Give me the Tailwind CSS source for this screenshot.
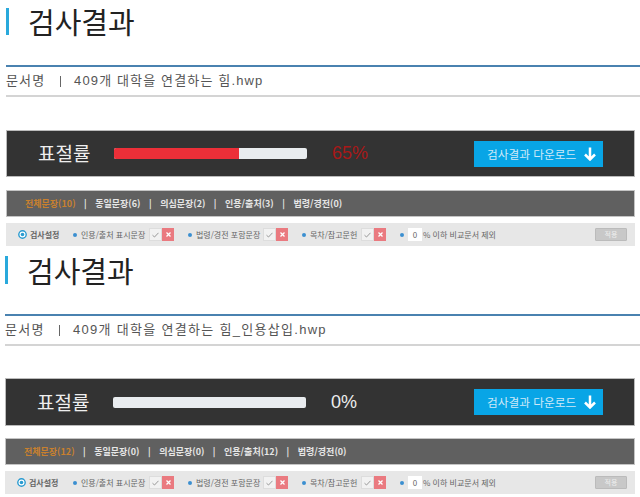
<!DOCTYPE html>
<html lang="ko">
<head>
  <meta charset="UTF-8" />
  <title>검사결과</title>
  <script src="https://cdn.jsdelivr.net/npm/@tailwindcss/browser@4"></script>
</head>
<body class="bg-white w-[640px] h-[497px] overflow-hidden font-['Noto_Sans_CJK_KR','Liberation_Sans',sans-serif]">

  <!-- First result -->
  <section class="h-[248px] pl-[6px] pt-[8px]">
    <div class="h-[27px] flex items-center border-l-[3px] border-[#29a9dc] pl-[19px]">
      <h1 class="text-[29px] leading-none text-[#222]">검사결과</h1>
    </div>
    <div class="mt-[30px] border-t-2 border-[#4a82b0] h-[32px] flex items-center text-[13px] tracking-[1.15px] text-[#555] border-b-2 border-b-[#d4d4d4]">
      <span class="w-[39px] whitespace-nowrap font-['Liberation_Sans','Noto_Sans_CJK_KR',sans-serif]">문서명</span>
      <span class="ml-[15px] w-px h-[11px] mr-[2px] bg-[#666]"></span>
      <span class="ml-[11px] font-['Liberation_Sans','Noto_Sans_CJK_KR',sans-serif]">409개 대학을 연결하는 힘.hwp</span>
    </div>
    <div class="mt-[33px] w-[629px] h-[47px] bg-[#333] border border-[#bbb] flex items-center">
      <span class="ml-[31px] w-[76px] text-[19px] text-[#eee]">표절률</span>
      <div class="w-[193px] h-[11px] rounded-[2px] bg-[#e9ecef] overflow-hidden">
        <div class="h-full bg-[#ec2f38]" style="width: 65%"></div>
      </div>
      <span class="ml-[25px] w-[142px] text-[18px] font-['Liberation_Sans',sans-serif] text-[#a81818]">65%</span>
      <div class="w-[129px] h-[26px] bg-[#08a5e6] flex items-center pl-[13px] gap-[8px] text-[11.7px] text-[#cfe9f8]">
        <span>검사결과 다운로드</span>
        <svg width="12" height="14" viewBox="0 0 12 14" fill="none" stroke="#fff" stroke-width="2.5"><path d="M6 0.5V12M1 7.5L6 12.5L11 7.5"/></svg>
      </div>
    </div>
    <div class="mt-[13px] w-[629px] h-[27px] bg-[#606060] border border-[#c4c4c4] flex items-center pl-[18px] text-[9px] font-bold text-[#e6e6e6]">
      <span class="text-[#c9802e]">전체문장(10)</span>
      <span class="mx-[8.5px]">|</span>
      <span>동일문장(6)</span>
      <span class="mx-[8.5px]">|</span>
      <span>의심문장(2)</span>
      <span class="mx-[8.5px]">|</span>
      <span>인용/출처(3)</span>
      <span class="mx-[8.5px]">|</span>
      <span>법령/경전(0)</span>
    </div>
    <div class="mt-[6px] w-[629px] h-[23px] bg-[#e7e7e7] flex items-center pl-[12px] text-[8px] text-[#666] whitespace-nowrap">
      <svg width="9" height="9" viewBox="0 0 9 9"><circle cx="4.5" cy="4.5" r="3.7" fill="#fff" stroke="#2a9bd0" stroke-width="1.4"/><circle cx="4.5" cy="4.5" r="1.8" fill="#2a9bd0"/></svg>
      <span class="ml-[3px] w-[43px] font-bold">검사설정</span>
      <span class="w-[4px] h-[4px] rounded-full bg-[#3b8fd0]"></span>
      <span class="ml-[4px] w-[68px]">인용/출처 표시문장</span>
      <span class="w-[13px] h-[13px] bg-[#f2f2f2] border border-[#ddd] flex items-center justify-center">
        <svg width="7" height="6" viewBox="0 0 7 6" fill="none" stroke="#999" stroke-width="1"><path d="M0.5 3.2L2.5 5L6.5 0.8"/></svg>
      </span>
      <span class="w-[12px] h-[13px] bg-[#ea7a80] flex items-center justify-center">
        <svg width="5" height="5" viewBox="0 0 5 5" fill="none" stroke="#fff" stroke-width="1.3"><path d="M0.5 0.5L4.5 4.5M4.5 0.5L0.5 4.5"/></svg>
      </span>
      <span class="ml-[14px] w-[4px] h-[4px] rounded-full bg-[#3b8fd0]"></span>
      <span class="ml-[4px] w-[67px]">법령/경전 포함문장</span>
      <span class="w-[13px] h-[13px] bg-[#f2f2f2] border border-[#ddd] flex items-center justify-center">
        <svg width="7" height="6" viewBox="0 0 7 6" fill="none" stroke="#999" stroke-width="1"><path d="M0.5 3.2L2.5 5L6.5 0.8"/></svg>
      </span>
      <span class="w-[12px] h-[13px] bg-[#ea7a80] flex items-center justify-center">
        <svg width="5" height="5" viewBox="0 0 5 5" fill="none" stroke="#fff" stroke-width="1.3"><path d="M0.5 0.5L4.5 4.5M4.5 0.5L0.5 4.5"/></svg>
      </span>
      <span class="ml-[14px] w-[4px] h-[4px] rounded-full bg-[#3b8fd0]"></span>
      <span class="ml-[4px] w-[51px]">목차/참고문헌</span>
      <span class="w-[13px] h-[13px] bg-[#f2f2f2] border border-[#ddd] flex items-center justify-center">
        <svg width="7" height="6" viewBox="0 0 7 6" fill="none" stroke="#999" stroke-width="1"><path d="M0.5 3.2L2.5 5L6.5 0.8"/></svg>
      </span>
      <span class="w-[12px] h-[13px] bg-[#ea7a80] flex items-center justify-center">
        <svg width="5" height="5" viewBox="0 0 5 5" fill="none" stroke="#fff" stroke-width="1.3"><path d="M0.5 0.5L4.5 4.5M4.5 0.5L0.5 4.5"/></svg>
      </span>
      <span class="ml-[14px] w-[4px] h-[4px] rounded-full bg-[#3b8fd0]"></span>
      <span class="ml-[4px] w-[14px] h-[13px] bg-white flex items-center justify-center text-[8px]">0</span>
      <span class="ml-[1px] w-[71px]">% 이하 비교문서 제외</span>
      <span class="ml-[101px] w-[32px] h-[13px] bg-[#c8c8c8] border border-[#bbb] rounded-[1px] flex items-center justify-center text-[7px] text-[#eee]">적용</span>
    </div>
  </section>

  <!-- Second result -->
  <section class="h-[249px] pl-[5px] pt-[8px]">
    <div class="h-[28px] flex items-center border-l-[3px] border-[#29a9dc] pl-[19px]">
      <h1 class="text-[29px] leading-none text-[#222]">검사결과</h1>
    </div>
    <div class="mt-[30px] border-t-2 border-[#4a82b0] h-[32px] flex items-center text-[13px] tracking-[1.3px] text-[#555] border-b-2 border-b-[#d4d4d4]">
      <span class="w-[39px] whitespace-nowrap font-['Liberation_Sans','Noto_Sans_CJK_KR',sans-serif]">문서명</span>
      <span class="ml-[15px] w-px h-[11px] mr-[2px] bg-[#666]"></span>
      <span class="ml-[11px] font-['Liberation_Sans','Noto_Sans_CJK_KR',sans-serif]">409개 대학을 연결하는 힘_인용삽입.hwp</span>
    </div>
    <div class="mt-[32px] w-[630px] h-[48px] bg-[#333] border border-[#bbb] flex items-center">
      <span class="ml-[31px] w-[76px] text-[19px] text-[#eee]">표절률</span>
      <div class="w-[193px] h-[11px] rounded-[2px] bg-[#e9ecef]"></div>
      <span class="ml-[25px] w-[143px] text-[18px] font-['Liberation_Sans',sans-serif] text-[#eee]">0%</span>
      <div class="w-[129px] h-[26px] bg-[#08a5e6] flex items-center pl-[13px] gap-[8px] text-[11.7px] text-[#cfe9f8]">
        <span>검사결과 다운로드</span>
        <svg width="12" height="14" viewBox="0 0 12 14" fill="none" stroke="#fff" stroke-width="2.5"><path d="M6 0.5V12M1 7.5L6 12.5L11 7.5"/></svg>
      </div>
    </div>
    <div class="mt-[12px] w-[630px] h-[27px] bg-[#606060] border border-[#c4c4c4] flex items-center pl-[18px] text-[9px] font-bold text-[#e6e6e6]">
      <span class="text-[#c9802e]">전체문장(12)</span>
      <span class="mx-[8.5px]">|</span>
      <span>동일문장(0)</span>
      <span class="mx-[8.5px]">|</span>
      <span>의심문장(0)</span>
      <span class="mx-[8.5px]">|</span>
      <span>인용/출처(12)</span>
      <span class="mx-[8.5px]">|</span>
      <span>법령/경전(0)</span>
    </div>
    <div class="mt-[6px] w-[630px] h-[23px] bg-[#e7e7e7] flex items-center pl-[12px] text-[8px] text-[#666] whitespace-nowrap">
      <svg width="9" height="9" viewBox="0 0 9 9"><circle cx="4.5" cy="4.5" r="3.7" fill="#fff" stroke="#2a9bd0" stroke-width="1.4"/><circle cx="4.5" cy="4.5" r="1.8" fill="#2a9bd0"/></svg>
      <span class="ml-[3px] w-[44px] font-bold">검사설정</span>
      <span class="w-[4px] h-[4px] rounded-full bg-[#3b8fd0]"></span>
      <span class="ml-[4px] w-[68px]">인용/출처 표시문장</span>
      <span class="w-[13px] h-[13px] bg-[#f2f2f2] border border-[#ddd] flex items-center justify-center">
        <svg width="7" height="6" viewBox="0 0 7 6" fill="none" stroke="#999" stroke-width="1"><path d="M0.5 3.2L2.5 5L6.5 0.8"/></svg>
      </span>
      <span class="w-[12px] h-[13px] bg-[#ea7a80] flex items-center justify-center">
        <svg width="5" height="5" viewBox="0 0 5 5" fill="none" stroke="#fff" stroke-width="1.3"><path d="M0.5 0.5L4.5 4.5M4.5 0.5L0.5 4.5"/></svg>
      </span>
      <span class="ml-[14px] w-[4px] h-[4px] rounded-full bg-[#3b8fd0]"></span>
      <span class="ml-[4px] w-[67px]">법령/경전 포함문장</span>
      <span class="w-[13px] h-[13px] bg-[#f2f2f2] border border-[#ddd] flex items-center justify-center">
        <svg width="7" height="6" viewBox="0 0 7 6" fill="none" stroke="#999" stroke-width="1"><path d="M0.5 3.2L2.5 5L6.5 0.8"/></svg>
      </span>
      <span class="w-[12px] h-[13px] bg-[#ea7a80] flex items-center justify-center">
        <svg width="5" height="5" viewBox="0 0 5 5" fill="none" stroke="#fff" stroke-width="1.3"><path d="M0.5 0.5L4.5 4.5M4.5 0.5L0.5 4.5"/></svg>
      </span>
      <span class="ml-[14px] w-[4px] h-[4px] rounded-full bg-[#3b8fd0]"></span>
      <span class="ml-[4px] w-[51px]">목차/참고문헌</span>
      <span class="w-[13px] h-[13px] bg-[#f2f2f2] border border-[#ddd] flex items-center justify-center">
        <svg width="7" height="6" viewBox="0 0 7 6" fill="none" stroke="#999" stroke-width="1"><path d="M0.5 3.2L2.5 5L6.5 0.8"/></svg>
      </span>
      <span class="w-[12px] h-[13px] bg-[#ea7a80] flex items-center justify-center">
        <svg width="5" height="5" viewBox="0 0 5 5" fill="none" stroke="#fff" stroke-width="1.3"><path d="M0.5 0.5L4.5 4.5M4.5 0.5L0.5 4.5"/></svg>
      </span>
      <span class="ml-[14px] w-[4px] h-[4px] rounded-full bg-[#3b8fd0]"></span>
      <span class="ml-[4px] w-[14px] h-[13px] bg-white flex items-center justify-center text-[8px]">0</span>
      <span class="ml-[1px] w-[71px]">% 이하 비교문서 제외</span>
      <span class="ml-[101px] w-[32px] h-[13px] bg-[#c8c8c8] border border-[#bbb] rounded-[1px] flex items-center justify-center text-[7px] text-[#eee]">적용</span>
    </div>
  </section>

</body>
</html>
